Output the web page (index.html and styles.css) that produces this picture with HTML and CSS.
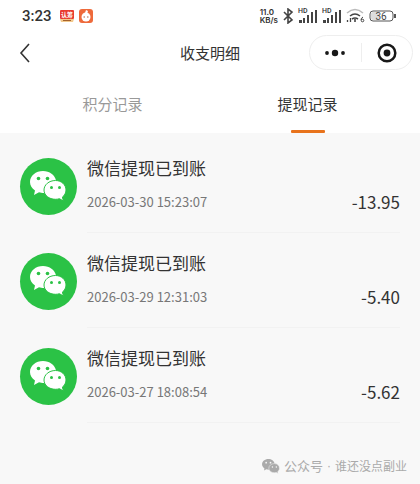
FILE: index.html
```html
<!DOCTYPE html>
<html lang="zh-CN">
  <head>
    <meta charset="utf-8" />
    <meta name="viewport" content="width=device-width, initial-scale=1.0" />
    <title>收支明细</title>
    <link rel="stylesheet" href="styles.css">
  </head>
  <body>
    <svg class="defs" aria-hidden="true">
      <symbol id="wechat" viewBox="0 0 37 31">
        <path d="M13 0C5.800 0 0 4.900 0 11c0 3.500 1.900 6.500 5 8.500L4 24l5-2.700c1.500.5 3 .7 5 .7h4l8-12.500C25 4 19.500 0 13 0z" />
        <path class="front" d="M25.500 9.500C19 9.500 14 13.800 14 19s5 9.300 11.500 9.300c1.400 0 2.700-.2 3.900-.6l4 2.300-1-3.900c2.200-1.700 3.600-4.200 3.600-7.100 0-5.200-4.500-9.500-10.500-9.500z" />
        <g class="eyes">
          <circle cx="8.500" cy="7.500" r="1.800" />
          <circle cx="17.500" cy="7.500" r="1.800" />
          <circle cx="21.500" cy="16.500" r="1.500" />
          <circle cx="29.500" cy="16.500" r="1.500" />
        </g>
      </symbol>
      <symbol id="signal" viewBox="0 0 20 14">
        <path d="M1 11h3v3H1zM5 9h2v5H5zM9 6h2v8H9zM13 3h2v11h-2zM17 1h2v13h-2z" />
      </symbol>
    </svg>

    <div class="status-bar">
      <span class="clock">3:23</span>
      <svg class="app-icon" width="16" height="14" viewBox="0 0 16 14">
        <path d="M1 10h14l-1 3H2z" fill="#f3c98c" />
        <path d="M4 11.500h8" stroke="#a5622c" />
        <rect x="1" y="1" width="14" height="9" rx="1" fill="#e93b2f" />
        <text x="8" y="8" text-anchor="middle" class="badge-text">认筹</text>
      </svg>
      <svg class="app-icon" width="14" height="14" viewBox="0 0 14 14">
        <rect width="14" height="14" rx="3" fill="#ee6a3b" />
        <circle cx="7" cy="8" r="4.500" fill="#fff" />
        <path d="M6 4l1-3 2 1-1 3z" fill="#fff" />
        <path d="M4.500 8h1.500M8 8h1.500" stroke="#b06040" />
      </svg>
      <div class="status-right">
        <div class="speed"><span>11.0</span><span>KB/s</span></div>
        <svg width="12" height="16" viewBox="0 0 12 16" class="line">
          <path d="M2 4l8 8-4 3V1l4 3-8 8" />
        </svg>
        <div class="sim"><span>HD</span><svg width="20" height="14"><use href="#signal" /></svg></div>
        <div class="sim"><span>HD</span><svg width="20" height="14"><use href="#signal" /></svg></div>
        <svg width="19" height="15" viewBox="0 0 19 15" class="line">
          <path d="M1 5q8-7 16 0" stroke="#bbb" />
          <path d="M4 8q5-4 10 0M6 11q3-2 6 0" />
          <path d="M9 11v3" />
          <path d="M1.500 12v2M4.500 10v4" stroke-width="1.300" />
          <path d="M17 9q-2 1-2 3" stroke-width="1" />
          <circle cx="16.500" cy="12.500" r="1.300" stroke-width="1" />
        </svg>
        <svg width="27" height="12" viewBox="0 0 27 12">
          <rect x="1" y="1" width="23" height="10" rx="3" fill="#fff" stroke="#555" />
          <rect x="2" y="2" width="8" height="8" rx="2" fill="#ddd" />
          <path d="M26 4v4" stroke="#555" stroke-width="2" />
          <text x="12" y="9.500" text-anchor="middle" class="battery-text">36</text>
        </svg>
      </div>
    </div>

    <header class="nav">
      <button class="back" aria-label="返回">
        <svg width="12" height="20" viewBox="0 0 12 20"><path d="M10 1L2 10l8 9" /></svg>
      </button>
      <h1>收支明细</h1>
      <div class="capsule">
        <button aria-label="更多">
          <svg width="22" height="20" viewBox="0 0 22 20">
            <circle cx="3" cy="10" r="1.900" /><circle cx="11" cy="10" r="3.200" /><circle cx="19" cy="10" r="1.900" />
          </svg>
        </button>
        <button aria-label="关闭">
          <svg width="20" height="20" viewBox="0 0 20 20">
            <circle cx="10" cy="10" r="8.300" class="ring" /><circle cx="10" cy="10" r="3.400" />
          </svg>
        </button>
      </div>
    </header>

    <nav class="tabs">
      <button class="tab">积分记录</button>
      <button class="tab active">提现记录</button>
    </nav>

    <main class="list">
      <div class="item">
        <span class="avatar"><svg width="37" height="31"><use href="#wechat" /></svg></span>
        <div class="item-body">
          <div>
            <h2>微信提现已到账</h2>
            <time>2026-03-30 15:23:07</time>
          </div>
          <span class="amount">-13.95</span>
        </div>
      </div>
      <div class="item">
        <span class="avatar"><svg width="37" height="31"><use href="#wechat" /></svg></span>
        <div class="item-body">
          <div>
            <h2>微信提现已到账</h2>
            <time>2026-03-29 12:31:03</time>
          </div>
          <span class="amount">-5.40</span>
        </div>
      </div>
      <div class="item">
        <span class="avatar"><svg width="37" height="31"><use href="#wechat" /></svg></span>
        <div class="item-body">
          <div>
            <h2>微信提现已到账</h2>
            <time>2026-03-27 18:08:54</time>
          </div>
          <span class="amount">-5.62</span>
        </div>
      </div>
    </main>

    <footer class="source">
      <svg width="18" height="15"><use href="#wechat" /></svg>
      <span class="source-type">公众号</span>
      <span class="source-dot">·</span>
      <span class="source-name">谁还没点副业</span>
    </footer>
  </body>
</html>
```

FILE: styles.css
```css
* {
  box-sizing: border-box;
}
body {
  margin: 0;
  background: #f8f8f8;
  color: #333;
  font-family: "Noto Sans CJK SC", sans-serif;
}
button {
  padding: 0;
  border: 0;
  background: none;
  color: inherit;
  font: inherit;
}
h1,
h2 {
  margin: 0;
  font-weight: 400;
}
svg {
  display: block;
}
.defs {
  position: absolute;
  width: 0;
  height: 0;
}
.eyes {
  fill: var(--icon-bg);
}
.front {
  stroke: var(--icon-bg);
}

/* status bar */
.status-bar {
  display: flex;
  align-items: center;
  height: 31px;
  padding: 0 24px 0 22px;
  background: #fff;
  font-family: Roboto, sans-serif;
}
.clock {
  margin-right: 7px;
  font-size: 15px;
  font-weight: 500;
}
.app-icon {
  margin-right: 4px;
}
.badge-text {
  fill: #fff;
  font: 700 6px "Noto Sans CJK SC", sans-serif;
}
.battery-text {
  fill: #444;
  font: 10px Roboto, sans-serif;
}
.status-right {
  display: flex;
  align-items: center;
  gap: 4px;
  margin-left: auto;
}
.speed {
  display: grid;
  font-family: Inter, sans-serif;
  font-size: 8px;
  font-weight: 600;
  line-height: 8px;
}
.line {
  fill: none;
  stroke: #444;
  stroke-width: 1.6;
}
.sim {
  position: relative;
  fill: #444;
}
.sim span {
  position: absolute;
  top: -1px;
  left: 0;
  font-size: 7px;
  font-weight: 500;
  line-height: 7px;
}

/* title bar */
.nav {
  display: grid;
  grid-template-columns: 1fr auto 1fr;
  align-items: center;
  height: 43px;
  padding: 0 7px 0 19px;
  background: #fff;
}
.back {
  justify-self: start;
}
.back svg {
  fill: none;
  stroke: #333;
  stroke-width: 1.6;
}
.nav h1 {
  margin-right: 12px;
  font-size: 15px;
  line-height: 22px;
}
.capsule {
  display: flex;
  justify-self: end;
  width: 104px;
  height: 35px;
  border: 1px solid #eee;
  border-radius: 18px;
  fill: #181818;
}
.capsule button {
  display: grid;
  flex: 1;
  place-items: center;
  margin: 7px 0;
}
.capsule button + button {
  border-left: 1px solid #eee;
}
.ring {
  fill: none;
  stroke: #181818;
  stroke-width: 2.5;
}

/* tabs */
.tabs {
  display: flex;
  height: 59px;
  padding: 0 15px;
  background: #fff;
}
.tab {
  position: relative;
  flex: 1;
  color: #999;
  font-size: 15px;
}
.tab.active {
  color: #333;
}
.tab.active::after {
  position: absolute;
  bottom: 0;
  left: 50%;
  width: 34px;
  height: 3px;
  margin-left: -17px;
  border-radius: 1px;
  background: #e8731c;
  content: "";
}

/* records */
.list {
  padding: 5px 20px 0;
}
.item {
  display: flex;
  align-items: center;
  gap: 10px;
}
.avatar {
  --icon-bg: #2bc246;
  display: grid;
  flex: none;
  place-items: center;
  width: 57px;
  height: 57px;
  margin-top: 2px;
  border-radius: 50%;
  background: #2bc246;
  fill: #fff;
}
.item-body {
  display: flex;
  flex: 1;
  align-items: flex-end;
  justify-content: space-between;
  height: 95px;
  padding-bottom: 20px;
  border-bottom: 1px solid #f2f2f2;
}
.item h2 {
  margin-bottom: 12px;
  font-size: 17px;
  line-height: 24px;
}
.item time {
  display: block;
  color: #777;
  font-size: 13px;
  line-height: 20px;
}
.amount {
  font-size: 17px;
  line-height: 20px;
}

/* account name */
.source {
  --icon-bg: #f8f8f8;
  display: flex;
  align-items: center;
  justify-content: flex-end;
  gap: 4px;
  padding: 33px 13px 8px;
  color: #aaa;
  font-size: 12px;
  line-height: 20px;
  fill: #aaa;
}
.source-type {
  font-size: 13px;
}
.source-dot {
  font-family: "Liberation Sans", sans-serif;
}
```
